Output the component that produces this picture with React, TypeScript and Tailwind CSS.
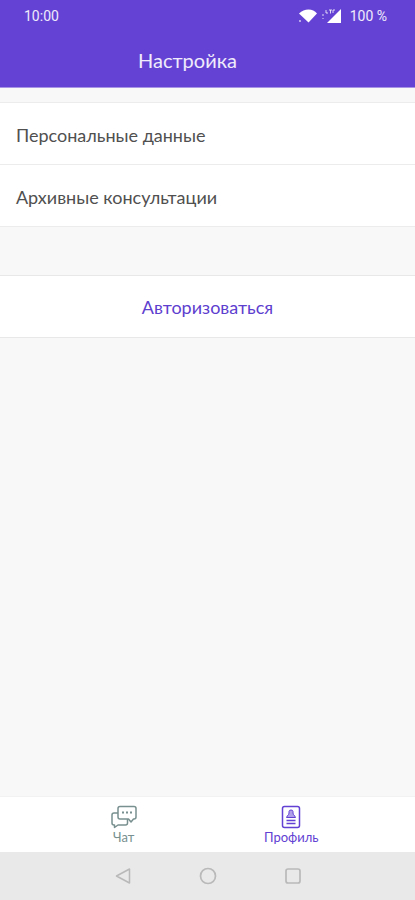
import type { ReactNode } from "react"

const settings = ["Персональные данные", "Архивные консультации"]

function StatusBar() {
  return (
    <div className="flex h-8 items-center justify-between pl-6 pr-7 font-[Roboto,sans-serif] text-sm text-white/90">
      <span>10:00</span>
      <div className="flex items-center gap-2">
        <div className="flex items-center gap-1">
          <svg className="h-4 w-5" viewBox="0 0 20 16" fill="#fff" aria-hidden="true">
            <path d="M1 5.500Q5.200 1.500 10.500 1.500T19 5.500L10.500 14.500Z" />
            <circle cx="2" cy="13" r="1" opacity=".7" />
          </svg>
          <svg className="h-4 w-5" viewBox="0 0 20 16" fill="#fff" aria-hidden="true">
            <path d="M19 1V15H5Z" />
            <path d="M4 2V5H6M7 2H10M8.500 2V5.500M13 2H11V5" fill="none" stroke="#fff" opacity=".8" />
            <path d="M0 6h2v2H0zM0 10h2v1H0z" opacity=".4" />
          </svg>
        </div>
        <span>100 %</span>
      </div>
    </div>
  )
}

function ChatIcon() {
  return (
    <svg className="h-6 w-7" viewBox="0 0 28 24" fill="none" stroke="currentColor" strokeWidth="1.500" strokeLinejoin="round" aria-hidden="true">
      <path d="M10 1.500H24Q26 1.500 26 3.500V12Q26 14 24 14H23.500L21 17L18.500 14H10Q8 14 8 12V3.500Q8 1.500 10 1.500Z" />
      <path d="M8 8H4Q2 8 2 10V18Q2 20 4 20H4.500V22.500L8 20H15.500Q17.500 20 17.500 18V14" />
      <path d="M12 7.500h2M16 7.500h2M20 7.500h2" strokeWidth="2" />
    </svg>
  )
}

function ProfileIcon() {
  return (
    <svg className="h-6 w-7" viewBox="0 0 28 24" fill="none" stroke="currentColor" aria-hidden="true">
      <rect x="5.500" y="1.500" width="17" height="21" rx="2" strokeWidth="1.500" />
      <path d="M12 6.500Q12 5 14 5T16 6.500V8Q16 10 17.500 10.500L18.500 12.500H9.500L10.500 10.500Q12 10 12 8Z" fill="currentColor" fillOpacity=".5" />
      <path d="M9.500 15.500h9M9.500 18.500h9" strokeWidth="1.300" />
    </svg>
  )
}

function Tab({ label, icon, active }: { label: string; icon: ReactNode; active?: boolean }) {
  return (
    <button
      aria-current={active ? "page" : undefined}
      className={`flex flex-1 flex-col items-center pt-2 text-[13px] leading-4 ${active ? "text-[#6241d3]" : "text-[#78908f]"}`}
    >
      {icon}
      <span>{label}</span>
    </button>
  )
}

export default function App() {
  return (
    <div className="flex min-h-screen flex-col bg-[#f8f8f8] font-[Lato,sans-serif] text-[#505050]">
      <header className="border-b border-[#a894e5] bg-[#6442d4]">
        <StatusBar />
        <h1 className="flex h-[55px] items-center justify-center pr-10 text-xl text-white/90">
          Настройка
        </h1>
      </header>

      <main className="flex-1 pt-3.5">
        <ul className="border-t border-[#ececec]">
          {settings.map((item) => (
            <li key={item} className="border-b border-[#ececec] bg-white">
              <button className="h-[61px] w-full px-4 pt-0.5 text-left text-lg">{item}</button>
            </li>
          ))}
        </ul>
        <button className="mt-12 h-[63px] w-full border-y border-[#e8e8e8] bg-white text-lg text-[#5e40cf]">
          Авторизоваться
        </button>
      </main>

      <nav className="flex h-14 border-t border-[#f2f2f2] bg-white px-10">
        <Tab label="Чат" icon={<ChatIcon />} />
        <Tab label="Профиль" icon={<ProfileIcon />} active />
      </nav>

      <div className="grid h-12 grid-cols-3 items-center justify-items-center bg-[#e9e9e9] px-20 text-[#b9b9b9]">
        <button aria-label="Назад">
          <svg className="size-5" viewBox="0 0 20 20" fill="none" stroke="currentColor" strokeWidth="1.500" strokeLinejoin="round" aria-hidden="true">
            <path d="M16.500 3V17L3.500 10Z" />
          </svg>
        </button>
        <button aria-label="Домой">
          <svg className="size-5" viewBox="0 0 20 20" fill="none" stroke="currentColor" strokeWidth="1.700" aria-hidden="true">
            <circle cx="10" cy="10" r="7.500" />
          </svg>
        </button>
        <button aria-label="Недавние">
          <svg className="size-5" viewBox="0 0 20 20" fill="none" stroke="currentColor" strokeWidth="1.700" aria-hidden="true">
            <rect x="3" y="3" width="14" height="14" rx="2" />
          </svg>
        </button>
      </div>
    </div>
  )
}
